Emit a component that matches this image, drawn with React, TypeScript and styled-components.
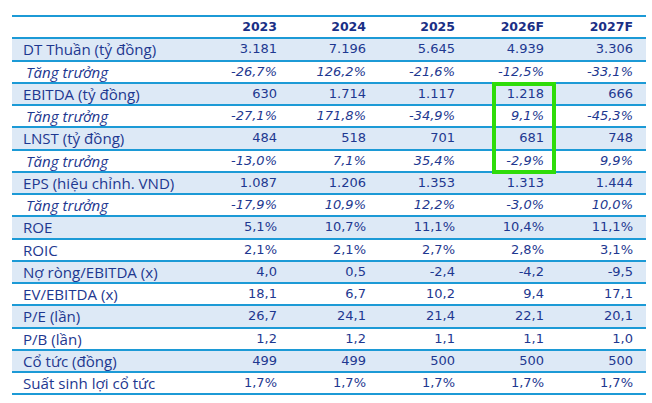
import React from 'react'
import styled, { createGlobalStyle } from 'styled-components'

const GlobalStyle = createGlobalStyle`
    body {
        margin: 0;
        background: #ffffff;
    }
`

const Page = styled.div`
    padding: 15px 6px 0 12px;
`

const Wrap = styled.div`
    position: relative;
    width: 634px;
`

const Table = styled.table`
    width: 634px;
    border-collapse: collapse;
    table-layout: fixed;
    border-top: 2px solid #1c9ad6;
    color: #1e3890;
`

const Row = styled.tr<{ $shade?: boolean }>`
    height: 22.25px;
    background: ${p => (p.$shade ? '#dde9f6' : '#ffffff')};
    border-bottom: 2px solid #1c9ad6;
`

const Label = styled.td<{ $italic?: boolean }>`
    box-sizing: border-box;
    width: 189px;
    padding: 0 0 0 ${p => (p.$italic ? '14px' : '11px')};
    font-family: 'Open Sans', 'Liberation Sans', sans-serif;
    font-size: 15.1px;
    font-style: ${p => (p.$italic ? 'italic' : 'normal')};
    white-space: nowrap;
    line-height: 18px;
`

const Num = styled.td<{ $italic?: boolean }>`
    box-sizing: border-box;
    width: 89px;
    padding: 0 13px 0 0;
    text-align: right;
    font-family: 'DejaVu Sans', Verdana, sans-serif;
    font-size: 13px;
    font-style: ${p => (p.$italic ? 'italic' : 'normal')};
    line-height: 18px;
    white-space: nowrap;
`

const Head = styled(Num)`
    font-weight: bold;
    font-size: 12.5px;
    color: #1a2f86;
`

const Highlight = styled.div`
    position: absolute;
    left: 480px;
    top: 67px;
    width: 64px;
    height: 92px;
    box-sizing: border-box;
    border: 4px solid #2fdc0a;
    pointer-events: none;
`

const years = ['2023', '2024', '2025', '2026F', '2027F']

const rows: { label: string; values: string[]; italic?: boolean; shade?: boolean }[] = [
    { label: 'DT Thuần (tỷ đồng)', values: ['3.181', '7.196', '5.645', '4.939', '3.306'], shade: true },
    { label: 'Tăng trưởng', values: ['-26,7%', '126,2%', '-21,6%', '-12,5%', '-33,1%'], italic: true },
    { label: 'EBITDA (tỷ đồng)', values: ['630', '1.714', '1.117', '1.218', '666'], shade: true },
    { label: 'Tăng trưởng', values: ['-27,1%', '171,8%', '-34,9%', '9,1%', '-45,3%'], italic: true },
    { label: 'LNST (tỷ đồng)', values: ['484', '518', '701', '681', '748'], shade: true },
    { label: 'Tăng trưởng', values: ['-13,0%', '7,1%', '35,4%', '-2,9%', '9,9%'], italic: true },
    { label: 'EPS (hiệu chỉnh. VND)', values: ['1.087', '1.206', '1.353', '1.313', '1.444'], shade: true },
    { label: 'Tăng trưởng', values: ['-17,9%', '10,9%', '12,2%', '-3,0%', '10,0%'], italic: true },
    { label: 'ROE', values: ['5,1%', '10,7%', '11,1%', '10,4%', '11,1%'], shade: true },
    { label: 'ROIC', values: ['2,1%', '2,1%', '2,7%', '2,8%', '3,1%'] },
    { label: 'Nợ ròng/EBITDA (x)', values: ['4,0', '0,5', '-2,4', '-4,2', '-9,5'], shade: true },
    { label: 'EV/EBITDA (x)', values: ['18,1', '6,7', '10,2', '9,4', '17,1'] },
    { label: 'P/E (lần)', values: ['26,7', '24,1', '21,4', '22,1', '20,1'], shade: true },
    { label: 'P/B (lần)', values: ['1,2', '1,2', '1,1', '1,1', '1,0'] },
    { label: 'Cổ tức (đồng)', values: ['499', '499', '500', '500', '500'], shade: true },
    { label: 'Suất sinh lợi cổ tức', values: ['1,7%', '1,7%', '1,7%', '1,7%', '1,7%'] },
]

export default function App() {
    return (
        <>
            <GlobalStyle />
            <Page>
                <Wrap>
                    <Table>
                        <tbody>
                            <Row>
                                <Label />
                                {years.map(y => <Head key={y}>{y}</Head>)}
                            </Row>
                            {rows.map((r, i) => (
                                <Row key={i} $shade={r.shade}>
                                    <Label $italic={r.italic}>{r.label}</Label>
                                    {r.values.map((v, j) => (
                                        <Num key={j} $italic={r.italic}>{v}</Num>
                                    ))}
                                </Row>
                            ))}
                        </tbody>
                    </Table>
                    <Highlight />
                </Wrap>
            </Page>
        </>
    )
}
